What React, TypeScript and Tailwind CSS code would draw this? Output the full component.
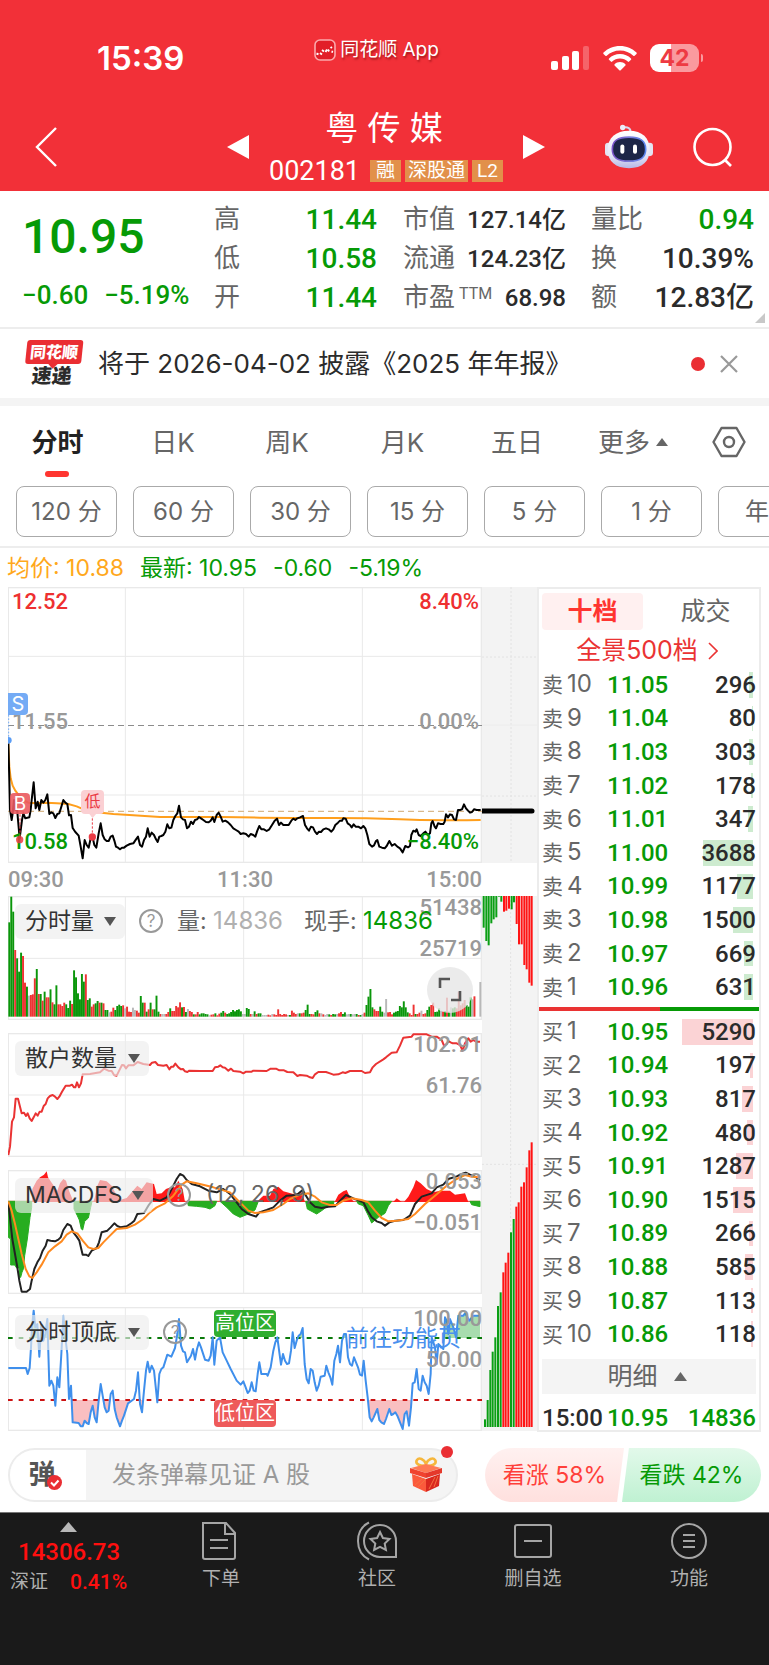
import React from "react";

const UI = "font-['Inter','Noto_Sans_CJK_SC',sans-serif]";
const NUM = "font-['Roboto','Noto_Sans_CJK_SC',sans-serif]";

/* ---------- chart data (three units per pixel) ---------- */

const PRICE =
  "25,490 28,600 30,690 35,720 38,700 42,660 46,690 50,670 54,720 59,775 66,720 70,700 76,715 88,712 92,690 95,660 101,607 107,685 113,665 118,690 124,660 130,668 136,660 142,643 148,702 154,697 160,700 166,714 172,702 178,700 184,680 190,660 196,668 202,672 207,706 213,705 218,744 226,756 236,767 242,800 248,835 254,780 260,795 266,803 272,775 277,768 283,795 289,803 296,760 302,730 308,765 314,778 320,783 326,783 332,770 338,767 344,785 348,800 354,803 360,808 366,803 372,803 380,797 390,792 400,790 408,778 414,770 420,795 426,800 432,780 438,770 443,745 449,770 455,758 462,765 468,778 473,786 478,770 484,768 490,765 496,755 502,733 508,745 514,743 520,720 526,708 532,700 537,677 543,712 549,718 555,720 561,745 567,740 573,725 579,732 585,720 591,718 597,711 603,715 610,720 618,726 626,727 632,722 638,712 643,726 650,705 656,698 662,710 668,725 676,722 684,727 692,735 700,745 708,750 716,755 722,762 730,760 738,762 746,770 752,762 760,765 766,770 772,752 778,738 784,748 792,748 800,753 808,748 816,735 824,722 831,716 837,735 843,728 850,735 858,735 866,735 874,722 880,716 886,720 892,715 900,712 909,708 915,735 921,745 927,752 933,740 939,742 945,755 951,762 957,755 963,756 970,748 978,745 986,748 994,755 1000,748 1006,735 1014,728 1020,722 1026,722 1030,715 1037,716 1043,730 1050,735 1055,742 1061,733 1067,740 1075,740 1083,745 1090,738 1096,745 1102,765 1108,792 1116,800 1122,796 1128,783 1132,780 1138,800 1146,803 1154,805 1160,798 1168,783 1176,797 1184,792 1192,800 1200,805 1208,817 1216,798 1224,802 1230,798 1234,765 1240,752 1246,755 1250,748 1256,765 1262,768 1270,760 1276,755 1284,765 1290,760 1294,730 1298,723 1304,740 1308,745 1314,730 1322,732 1330,732 1334,725 1338,703 1344,712 1350,703 1356,705 1362,718 1368,720 1374,690 1380,690 1386,688 1392,673 1398,685 1404,692 1410,698 1416,696 1422,688 1430,690 1442,690";

const AVERAGE =
  "25,490 28,560 32,595 38,617 46,632 56,645 70,660 85,668 110,670 140,668 170,670 205,672 230,679 255,690 290,697 340,702 400,706 480,711 560,711 660,711 780,713 880,714 1000,714 1100,715 1200,718 1260,720 1340,721 1400,721 1442,720";

const VOLUME =
  "g283 g360 g315 r200 g175 g135 g192 r182 r102 g90 x63 r65 r67 r115 g143 r68 g68 r48 g75 r58 r58 g82 r43 g37 g94 r37 r37 r32 r42 g37 g26 g48 r38 g139 g118 g70 g52 g128 g105 r127 g50 g55 r30 r37 g40 g47 r42 g42 r40 g20 g20 x13 r15 r27 g20 g32 g36 g32 r34 x25 r30 r15 r14 x27 x20 r18 r12 g62 g42 r42 g15 r22 g42 r22 g22 g63 g15 r8 x8 x8 r8 r14 g25 r17 r17 r32 r28 r43 g28 r29 g14 x23 r17 r14 g7 r7 r14 g7 g10 g10 g8 g7 x4 r6 r7 g10 r4 r9 g12 g17 r12 g8 g10 g14 g20 g16 g20 g22 g16 x8 x8 g26 g23 r8 x8 g16 r8 g10 g10 x5 x5 x5 r6 r4 x8 r7 r5 r22 r8 r5 r8 r7 x5 g5 r18 r12 r8 x10 g10 r10 r12 g20 g36 g8 r8 r7 g14 g19 r10 x10 r7 x5 x8 g7 r5 g8 g7 x8 r10 r14 g8 g13 x7 x8 g8 x7 x8 g8 r5 g5 x8 r12 g35 g60 g83 g28 r22 r17 r17 g30 g15 x12 x53 r13 r14 r7 g12 g15 g17 g32 g28 g46 g28 g13 r10 r5 r36 g8 r8 r12 x18 r8 r10 g20 g30 r35 r42 g14 g15 g25 x18 r16 g17 r57 g15 x28 g25 g28 r25 r75 r34 r40 r50 g35 g30 g58 x52 r61 x0 x0 x104".split(" ");

const CROWD =
  "25,825 30,800 36,725 42,712 47,656 54,656 60,680 65,700 72,698 78,708 83,700 89,715 95,723 101,712 107,700 113,707 119,695 125,695 131,678 137,672 143,655 150,648 158,645 165,650 172,657 178,650 186,635 197,617 210,617 216,614 222,622 226,622 231,607 237,622 243,610 248,583 270,582 300,577 312,566 325,572 335,573 342,585 350,587 356,575 366,555 372,556 378,565 385,556 400,556 413,546 430,552 450,555 456,548 466,546 474,555 490,557 500,555 508,568 514,560 520,560 526,551 535,562 543,568 549,567 555,574 562,576 568,572 600,573 638,573 645,562 655,560 661,556 668,562 675,563 685,572 693,566 700,573 720,575 730,580 738,575 755,575 760,572 800,573 812,566 828,566 838,571 852,571 862,576 880,577 892,588 900,585 920,587 930,592 938,594 945,583 955,576 978,576 990,580 1000,584 1015,583 1028,577 1036,579 1050,573 1085,573 1095,579 1110,577 1118,562 1128,552 1150,538 1158,532 1175,518 1190,517 1200,497 1210,473 1235,470 1240,463 1280,463 1295,470 1310,470 1318,475 1325,480 1332,497 1340,492 1345,483 1352,487 1358,490 1370,490 1380,495 1388,512 1395,490 1405,475 1412,485 1420,480 1428,485 1440,485";

const DIF =
  "25,125 32,190 37,235 45,280 52,320 58,360 65,393 80,393 90,385 95,360 103,325 112,305 120,292 128,270 137,255 142,238 152,240 165,242 175,237 182,230 190,208 202,190 212,195 220,215 230,228 238,240 248,282 258,282 265,286 275,270 290,262 297,245 305,215 322,210 332,200 343,188 352,196 362,200 380,197 395,187 403,180 412,160 432,157 445,135 460,115 480,120 500,110 510,95 520,75 530,55 540,40 550,45 560,58 575,70 600,77 625,90 650,95 670,85 690,100 710,125 725,145 745,160 768,168 778,155 800,148 820,140 840,120 860,105 890,103 908,88 918,105 930,125 945,138 965,142 985,138 1005,137 1020,120 1038,103 1060,113 1090,125 1103,150 1115,170 1130,182 1145,187 1155,195 1168,185 1185,180 1210,178 1230,165 1245,130 1265,108 1295,98 1310,80 1330,72 1345,55 1370,47 1385,40 1397,36 1410,42 1425,48 1440,58";

const DEA =
  "25,122 35,150 45,190 55,235 65,280 77,325 88,347 97,352 110,335 125,312 145,275 165,257 185,242 200,222 215,212 232,218 248,240 265,260 280,265 295,262 310,245 330,225 350,205 380,202 405,192 430,175 450,155 470,140 495,128 520,105 545,72 560,62 590,68 640,80 690,95 720,125 745,150 765,157 790,155 820,148 850,130 870,115 900,102 925,98 945,108 965,125 990,133 1010,133 1030,120 1055,113 1085,118 1105,125 1125,150 1145,172 1165,182 1190,180 1225,175 1245,160 1275,130 1305,105 1340,75 1370,55 1395,43 1415,48 1440,50";

const MACD_DOWN = [
  "25,122 25,230 32,235 32,313 44,313 50,322 58,322 58,350 62,350 66,335 70,325 74,285 82,235 90,170 95,140 95,122",
  "222,122 222,145 232,165 238,178 244,205 248,208 254,182 265,172 272,140 276,122",
  "562,122 565,135 590,137 615,140 630,145 645,135 650,122",
  "660,122 680,140 700,160 720,170 745,160 765,148 775,122",
  "917,122 922,145 950,160 965,150 985,135 1000,132 1002,122",
  "1070,122 1075,130 1090,135 1105,165 1115,187 1135,170 1155,158 1165,135 1175,122",
  "1410,122 1415,132 1440,138 1440,122",
];
const MACD_UP = [
  "97,124 97,85 110,60 120,50 132,42 140,32 144,50 156,68 172,90 180,68 190,55 198,60 207,90 215,110 220,124",
  "280,124 284,112 292,75 300,58 320,62 335,75 345,95 360,118 380,112 395,95 412,75 425,85 440,65 462,70 470,100 485,98 498,85 512,80 525,80 535,60 548,85 555,124",
  "770,124 790,105 810,105 820,85 835,78 850,92 880,100 905,95 915,124",
  "1004,124 1015,102 1030,92 1040,88 1050,110 1062,124",
  "1180,124 1190,113 1205,124",
  "1212,124 1225,108 1240,80 1248,58 1262,68 1280,85 1300,95 1320,90 1350,90 1365,102 1395,98 1405,124",
];

const SWING =
  "25,622 78,622 83,640 89,622 93,560 96,500 101,450 106,500 112,490 118,588 124,490 130,540 136,520 142,475 148,675 154,660 160,675 166,735 172,650 178,680 184,580 190,465 196,530 202,580 207,715 213,675 218,785 236,787 242,797 248,797 254,780 260,787 266,790 272,755 278,735 284,770 290,785 296,720 302,670 308,705 314,740 320,755 326,750 332,700 338,690 344,745 350,770 360,797 366,780 372,765 384,728 402,715 408,690 414,635 420,730 426,755 432,690 438,630 443,603 449,635 455,615 462,630 472,725 478,640 484,625 490,620 502,582 514,588 525,562 532,520 537,475 543,555 549,572 555,575 561,605 567,595 573,585 579,565 585,597 591,565 597,545 603,560 615,597 626,600 632,585 638,530 643,612 650,540 660,530 668,575 680,600 692,625 710,660 722,672 730,662 737,680 743,697 749,690 755,665 761,690 767,692 773,640 778,605 784,640 800,640 803,645 812,620 820,570 826,545 832,530 838,575 843,612 849,580 855,600 861,610 867,608 873,570 878,515 884,562 890,540 896,525 902,520 908,502 914,610 920,655 926,668 932,625 938,630 944,665 950,690 956,675 962,648 974,645 979,615 985,635 991,650 997,672 1003,600 1009,580 1014,555 1020,605 1026,540 1032,520 1038,520 1044,590 1050,610 1056,615 1062,590 1068,605 1074,620 1080,642 1086,645 1091,600 1097,660 1103,710 1109,770 1115,782 1121,770 1132,745 1138,778 1144,785 1152,790 1158,775 1168,745 1174,763 1180,760 1186,755 1192,765 1198,780 1208,805 1214,760 1220,752 1227,795 1233,740 1238,668 1244,665 1250,625 1256,685 1262,690 1268,645 1274,665 1280,675 1286,700 1292,640 1295,530 1305,560 1310,610 1315,550 1330,565 1335,470 1340,480 1345,520 1350,475 1360,500 1368,530 1375,465 1390,465 1395,458 1400,465 1408,480 1420,465 1440,465";

const DEPTH_TOP = "g143 g183 g196 g130 g118 g112 g50 g65 r95 r92 r86 g88 g67 r132 r193 r193 r255 r268 r308 r317".split(" ");
const DEPTH_BOTTOM = "g1618 g1560 g1470 g1415 g1372 g1278 g1237 r1177 r1148 r1118 g1057 g1017 r980 r967 r920 r907 r862 r811 r787".split(" ");

const TONE: Record<string, string> = { g: "#0a960a", r: "#ee3333", x: "#b8b8b8" };

const SELLS: [string, string, number][] = [
  ["10", "11.05", 296], ["9", "11.04", 80], ["8", "11.03", 303], ["7", "11.02", 178], ["6", "11.01", 347],
  ["5", "11.00", 3688], ["4", "10.99", 1177], ["3", "10.98", 1500], ["2", "10.97", 669], ["1", "10.96", 631],
];
const BUYS: [string, string, number][] = [
  ["1", "10.95", 5290], ["2", "10.94", 197], ["3", "10.93", 817], ["4", "10.92", 480], ["5", "10.91", 1287],
  ["6", "10.90", 1515], ["7", "10.89", 266], ["8", "10.88", 585], ["9", "10.87", 113], ["10", "10.86", 118],
];

/* ---------- header ---------- */

function StatusBar() {
  return (
    <div className="grid h-[100px] grid-cols-[1fr_auto_1fr] items-center pt-4 pr-4">
      <span className="pl-[97px] text-[33px] leading-10 font-semibold">15:39</span>
      <div className="flex items-center gap-1 pb-4 text-[19px] leading-6 [text-shadow:1px_2px_2px_rgba(90,0,0,.5)]">
        <svg viewBox="0 0 22 22" className="size-[22px]" fill="none">
          <rect x="1" y="1" width="20" height="20" rx="5" fill="#e21e28" stroke="#fba9ac" strokeWidth="1.6" />
          <path d="M2.500 14.500l2 .8M6 14l2 1.500M8 11l2 1.500M11.500 13l1.500-2.500M14 10.500l1 2M16.500 9l1.500-1M17.500 12.500l1.500.5" stroke="#fff" strokeWidth="1.900" />
        </svg>
        <span>同花顺 App</span>
      </div>
      <div className="flex items-center justify-end gap-[13px] pr-[50px]">
        <svg viewBox="0 0 39 25" className="h-[25px] w-[39px]" fill="#fff">
          <rect x="0" y="15" width="7" height="9" rx="2" />
          <rect x="11" y="10" width="7" height="14" rx="2" />
          <rect x="21" y="5" width="7" height="19" rx="2" />
          <rect x="32" y="0" width="6" height="24" rx="2" opacity=".25" />
        </svg>
        <svg viewBox="0 0 34 25" className="h-[25px] w-[34px]" fill="#fff">
          <path d="M17 0C10.500 0 4.700 2.500.500 6.600c-.4.4-.4.9 0 1.300l1.900 1.900c.4.4.9.4 1.300 0C7.100 6.500 11.800 4.500 17 4.500s9.900 2 13.300 5.300c.4.4.9.4 1.300 0l1.900-1.900c.4-.4.4-.9 0-1.300C29.300 2.500 23.500 0 17 0z" />
          <path d="M17 8c-4.300 0-8.200 1.700-11 4.400-.4.4-.4.9 0 1.300l1.900 1.900c.4.4.9.4 1.300 0 2-1.900 4.800-3.100 7.800-3.100s5.800 1.200 7.800 3.100c.4.4.9.4 1.300 0l1.900-1.900c.4-.4.4-.9 0-1.300C25.200 9.700 21.300 8 17 8z" />
          <path d="M17 16c-2.100 0-4 .8-5.400 2.200-.4.4-.4.9 0 1.300l4.700 4.800c.4.4 1 .4 1.400 0l4.700-4.800c.4-.4.4-.9 0-1.300C21 16.800 19.100 16 17 16z" />
        </svg>
        <div className="flex items-center gap-0.5">
          <div className="h-7 w-[49px] rounded-[9px] bg-linear-to-r from-white from-43% to-[#fa9a9e] to-43% text-center text-[23px] leading-7 font-bold text-[#ee3a43]">
            42
          </div>
          <div className="h-2 w-[2px] rounded-r bg-[#fa9a9e]" />
        </div>
      </div>
    </div>
  );
}

function Robot() {
  return (
    <svg viewBox="0 0 144 134" className="h-[45px] w-12">
      <defs>
        <linearGradient id="shell" x1="0" y1="0" x2="0" y2="1">
          <stop offset="0" stopColor="#ffffff" />
          <stop offset=".65" stopColor="#e6e6f6" />
          <stop offset="1" stopColor="#b6b8e6" />
        </linearGradient>
        <linearGradient id="rim" x1="0" y1="0" x2="1" y2="0">
          <stop offset="0" stopColor="#7a52c8" />
          <stop offset=".5" stopColor="#7a7ad8" />
          <stop offset="1" stopColor="#5a86f0" />
        </linearGradient>
      </defs>
      <path d="M76 24C78 12 68 8 56 10" stroke="#d8d8ee" strokeWidth="6" fill="none" />
      <circle cx="53" cy="10" r="8" fill="#ececf8" />
      <rect x="0" y="56" width="20" height="40" rx="10" fill="#e4e4f2" />
      <rect x="124" y="56" width="20" height="40" rx="10" fill="#e4e4f2" />
      <path d="M72 20c40 0 62 22 62 56 0 36-22 56-62 56S8 112 8 76c0-34 24-56 64-56z" fill="url(#shell)" />
      <path d="M72 39c34 0 50 10 50 36s-16 36-50 36-50-10-50-36 16-36 50-36z" fill="#1c2547" stroke="url(#rim)" strokeWidth="5" />
      <rect x="46" y="61" width="12" height="28" rx="6" fill="#fff" />
      <rect x="84" y="61" width="12" height="28" rx="6" fill="#fff" />
    </svg>
  );
}

function TitleBar() {
  return (
    <div className="grid h-[91px] grid-cols-[1fr_auto_1fr] items-center pt-0.5 pl-[3px]">
      <button aria-label="返回" className="ml-[31px] w-6">
        <svg viewBox="0 0 24 40" className="h-10 w-6" fill="none" stroke="#fff" strokeWidth="2.400">
          <path d="M22 1L3 20l19 19" />
        </svg>
      </button>
      <div className="flex items-center gap-5">
        <button aria-label="上一只">
          <svg viewBox="0 0 22 24" className="h-6 w-[22px]" fill="#fff"><path d="M22 0v24L0 12z" /></svg>
        </button>
        <div className="flex flex-col items-center">
          <h1 className="pr-1 text-[33px] leading-[48px]">粤 传 媒</h1>
          <div className={`flex items-center gap-1 ${NUM} text-[19px] leading-[38px]`}>
            <span className="mr-1.5 text-[27px]">002181</span>
            <span className="bg-[#e2904a] px-1.5 leading-[22px]">融</span>
            <span className="bg-[#e2904a] px-[3px] leading-[22px]">深股通</span>
            <span className="bg-[#e2904a] px-[5px] leading-[22px]">L2</span>
          </div>
        </div>
        <button aria-label="下一只">
          <svg viewBox="0 0 22 24" className="h-6 w-[22px]" fill="#fff"><path d="M0 0v24l22-12z" /></svg>
        </button>
      </div>
      <div className="flex items-center justify-end gap-10 pr-[36px]">
        <button aria-label="智能助手"><Robot /></button>
        <button aria-label="搜索">
          <svg viewBox="0 0 40 40" className="size-10" fill="none" stroke="#fff" strokeWidth="2.600">
            <circle cx="19.500" cy="20" r="18" />
            <path d="M31.500 32.500L38 39" />
          </svg>
        </button>
      </div>
    </div>
  );
}

/* ---------- quote summary ---------- */

function Quote() {
  const label = "text-[26px] text-[#666]";
  return (
    <section className={`relative flex h-[138px] border-b-2 border-[#ededed] pt-[9px] ${NUM} text-[#2b2b2b]`}>
      <div className="flex w-[206px] shrink-0 flex-col pl-[22px] font-medium text-[#069a06]">
        <span className="pt-2 text-[48px] leading-[58px]">10.95</span>
        <span className="flex gap-4 pt-2 text-[26px] leading-[42px]"><span>−0.60</span><span>−5.19%</span></span>
      </div>
      <dl className="grid flex-1 auto-rows-[39px] grid-cols-[30fr_159fr_52fr_136fr_52fr_111fr] items-center pr-[15px] pl-2 text-right font-medium whitespace-nowrap [&_dt]:text-left [&_dt]:font-normal">
        <dt className={label}>高</dt><dd className="pr-[26px] text-[28px] text-[#069a06]">11.44</dd>
        <dt className={label}>市值</dt><dd className="pr-[25px] text-[24px]">127.14亿</dd>
        <dt className={label}>量比</dt><dd className="text-[28px] text-[#069a06]">0.94</dd>
        <dt className={label}>低</dt><dd className="pr-[26px] text-[28px] text-[#069a06]">10.58</dd>
        <dt className={label}>流通</dt><dd className="pr-[25px] text-[24px]">124.23亿</dd>
        <dt className={label}>换</dt><dd className="text-[28px]">10.39%</dd>
        <dt className={label}>开</dt><dd className="pr-[26px] text-[28px] text-[#069a06]">11.44</dd>
        <dt className={`${label} flex w-0`}>市盈<sup className="top-2 pl-1 text-[16px] leading-4">TTM</sup></dt><dd className="pr-[25px] text-[24px]">68.98</dd>
        <dt className={label}>额</dt><dd className="text-[28px]">12.83亿</dd>
      </dl>
      <svg viewBox="0 0 10 10" className="absolute right-1 bottom-1 size-2.5" fill="#c8c8c8"><path d="M10 0v10H0z" /></svg>
    </section>
  );
}

function News() {
  return (
    <section className="flex h-[77px] items-center border-b-8 border-[#f4f4f4] pr-[31px] pl-[25px] text-[26px] text-[#2b2b2b]">
      <div className="flex w-[56px] -skew-x-6 flex-col items-center font-black">
        <span className="relative z-10 w-full rounded-[3px] bg-[#ea2e33] text-center text-[16px] leading-6 text-white after:absolute after:-bottom-[3px] after:left-6 after:size-2 after:rotate-45 after:bg-[#ea2e33]">同花顺</span>
        <span className="text-[20px] leading-6">速递</span>
      </div>
      <a href="#report" className="ml-[17px] flex-1 whitespace-nowrap">将于 2026-04-02 披露《2025 年年报》</a>
      <span className="mr-[15px] size-3.5 rounded-full bg-[#ea2e33]" />
      <button aria-label="关闭">
        <svg viewBox="0 0 18 18" className="size-[18px]" stroke="#999" strokeWidth="2.200"><path d="M1 1l16 16M17 1L1 17" /></svg>
      </button>
    </section>
  );
}

/* ---------- period controls ---------- */

function Periods() {
  return (
    <nav className="border-b-2 border-[#ededed] pb-[9px] text-[#666]">
      <div className="flex h-[80px] items-center pb-2 text-[26px]">
        <button className="relative w-[115px] font-bold text-[#222] after:absolute after:-bottom-[15px] after:left-[45px] after:h-1.5 after:w-6 after:rounded-full after:bg-[#ff3530]">分时</button>
        <button className="w-[116px]">日K</button>
        <button className="w-[112px]">周K</button>
        <button className="w-[119px]">月K</button>
        <button className="w-[110px]">五日</button>
        <button className="flex flex-1 items-center justify-center gap-1.5 pr-[18px]">
          更多
          <svg viewBox="0 0 12 8" className="h-2 w-3" fill="#666"><path d="M6 0l6 8H0z" /></svg>
        </button>
        <button aria-label="设置" className="mr-[23px]">
          <svg viewBox="0 0 34 32" className="h-8 w-[34px]" fill="none" stroke="#666" strokeWidth="2.400" strokeLinejoin="round">
            <path d="M9.500 2h15L32.500 16l-8 14h-15L1.500 16z" />
            <circle cx="17" cy="16" r="5" />
          </svg>
        </button>
      </div>
      <div className="flex gap-4 overflow-hidden pl-4 text-[24px] leading-[49px]">
        {["120 分", "60 分", "30 分", "15 分", "5 分", "1 分", "年 K"].map((p) => (
          <button key={p} className="w-[101px] shrink-0 rounded-lg border border-[#aaa]">{p}</button>
        ))}
      </div>
    </nav>
  );
}

/* ---------- charts ---------- */

function Grid({ y, h, rows }: { y: number; h: number; rows: number[] }) {
  return (
    <g stroke="#e9e9e9" strokeWidth="4" fill="none">
      <rect x="25" y={y + 2} width="1419" height={h - 4} />
      {[376, 731, 1087].map((x) => <path key={x} d={`M${x} ${y}v${h}`} strokeWidth="3" />)}
      {rows.map((r) => <path key={r} d={`M24 ${r}h1422`} strokeWidth="3" />)}
    </g>
  );
}

const AXIS = `absolute ${NUM} text-[22px] leading-6 font-medium`;

function PriceChart() {
  return (
    <div className="relative h-[276px]">
      <svg viewBox="24 21 1422 828" preserveAspectRatio="none" className="size-full" fill="none">
        <Grid y={21} h={828} rows={[229, 645]} />
        <path d="M24 436.500h1422" stroke="#8c8c8c" strokeWidth="3.500" strokeDasharray="18 12" />
        <path d="M24 694h1422" stroke="#d9b98c" strokeWidth="3.500" strokeDasharray="18 12" />
        <polyline points={AVERAGE} stroke="#ff9f1c" strokeWidth="6" />
        <polyline points={PRICE} stroke="#000" strokeWidth="6" strokeLinejoin="round" />
        <path d="M26 405v75" stroke="#74abf5" strokeWidth="3" strokeDasharray="5 5" />
        <circle cx="25" cy="481" r="10" fill="#5b9df5" />
      </svg>
      <span className={`${AXIS} top-[3px] left-1 text-[#ee3030]`}>12.52</span>
      <span className={`${AXIS} top-[3px] right-[3px] text-[#ee3030]`}>8.40%</span>
      <span className={`${AXIS} top-[123px] left-1 text-[#999]`}>11.55</span>
      <span className={`${AXIS} top-[123px] right-[3px] text-[#999]`}>0.00%</span>
      <span className={`${AXIS} top-[243px] left-1 text-[#069a06]`}>10.58</span>
      <span className={`${AXIS} top-[243px] right-[3px] text-[#069a06]`}>−8.40%</span>
      <svg viewBox="24 21 1422 828" preserveAspectRatio="none" className="absolute inset-0 size-full" fill="#ea3a44">
        <path d="M60 703v70M277 703v60" stroke="#ea3a44" strokeWidth="3" strokeDasharray="7 5" />
        <circle cx="59" cy="779" r="11" opacity=".85" />
        <circle cx="277" cy="771" r="11" />
        <path d="M266 700h24l-12 14z" fill="#fbd0d3" />
      </svg>
      <span className="absolute top-[106px] left-0 h-[22px] w-5 rounded-r-sm bg-[#74abf5] text-center text-[20px] leading-[22px] text-white">S</span>
      <span className="absolute top-[206px] left-0.5 h-[21px] w-5 rounded-sm bg-[#ea5a5f]/90 text-center text-[19px] leading-[21px] text-white">B</span>
      <span className="absolute top-[203px] left-[73px] h-6 w-[23px] rounded-sm bg-[#fbd0d3] text-center text-[16px] leading-[23px] text-[#ea3a44]">低</span>
    </div>
  );
}

function Indicator({ name, width }: { name: string; width: string }) {
  return (
    <div className={`absolute top-2 left-[7px] h-[35px] ${width}`}>
      <select aria-label="指标" defaultValue={name} className="size-full appearance-none rounded-md bg-[#ececec]/65 pl-2.5 text-[23px] text-[#333]">
        <option>{name}</option>
      </select>
      <svg viewBox="0 0 12 9" className="pointer-events-none absolute top-[13px] right-[9px] h-[9px] w-3" fill="#555"><path d="M0 0h12L6 9z" /></svg>
    </div>
  );
}

function Help({ place }: { place: string }) {
  return (
    <button aria-label="指标说明" className={`absolute top-[13px] size-6 rounded-full border-2 border-[#999] text-[17px] leading-5 text-[#999] ${place}`}>?</button>
  );
}

function VolumeChart() {
  return (
    <div className="relative h-[124px]">
      <svg viewBox="24 48 1422 372" preserveAspectRatio="none" className="size-full">
        <Grid y={48} h={372} rows={[235]} />
        {VOLUME.map((v, i) => {
          const h = Number(v.slice(1));
          return <rect key={i} x={25 + (i * 1419) / VOLUME.length} y={410 - h} width="5.800" height={h} fill={TONE[v[0]]} />;
        })}
      </svg>
      <span className={`${AXIS} top-0 right-0 text-[#999]`}>51438</span>
      <span className={`${AXIS} top-[41px] right-0 text-[#999]`}>25719</span>
      <Indicator name="分时量" width="w-[110px]" />
      <Help place="left-[131px]" />
      <div className="absolute top-[11px] left-[169px] flex text-[23px] leading-7 whitespace-pre text-[#666]">
        <span>量: </span><span className="text-[24px] text-[#b0b0b0]">14836</span>
        <span className="pl-[21px]">现手: </span><span className="text-[24px] text-[#069a06]">14836</span>
      </div>
      <button aria-label="全屏" className="absolute top-[71px] right-[9px] size-[46px] rounded-full bg-[#e6e6e6]/80">
        <svg viewBox="0 0 46 46" className="size-full" fill="none" stroke="#555" strokeWidth="2.600">
          <path d="M13 21v-9h10M24 33h9v-9" />
        </svg>
      </button>
    </div>
  );
}

function CrowdChart() {
  return (
    <div className="relative h-[124px]">
      <svg viewBox="24 459 1422 372" preserveAspectRatio="none" className="size-full">
        <Grid y={459} h={372} rows={[645]} />
        <polyline points={CROWD} fill="none" stroke="#ea3333" strokeWidth="6" strokeLinejoin="round" />
      </svg>
      <span className={`${AXIS} top-0 right-0 text-[#999]`}>102.91</span>
      <span className={`${AXIS} top-[41px] right-0 text-[#999]`}>61.76</span>
      <Indicator name="散户数量" width="w-[134px]" />
    </div>
  );
}

function MacdChart() {
  return (
    <div className="relative h-[124px]">
      <svg viewBox="24 28 1422 372" preserveAspectRatio="none" className="size-full">
        <Grid y={28} h={372} rows={[214]} />
        <path d="M24 122h1416" stroke="#ea3333" strokeWidth="3" />
        {MACD_DOWN.map((p) => <polygon key={p} points={p} fill="#27ad20" stroke="#27ad20" strokeWidth="3" />)}
        {MACD_UP.map((p) => <polygon key={p} points={p} fill="#ff1a1a" />)}
        <polyline points={DIF} fill="none" stroke="#222" strokeWidth="6" strokeLinejoin="round" />
        <polyline points={DEA} fill="none" stroke="#ff8a1f" strokeWidth="6" strokeLinejoin="round" />
      </svg>
      <span className={`${AXIS} top-0 right-0 text-[#999]`}>0.053</span>
      <span className={`${AXIS} top-[41px] right-0 text-[#999]`}>−0.051</span>
      <Indicator name="MACDFS" width="w-[138px]" />
      <Help place="left-[159px]" />
      <span className="absolute top-[10px] left-[198px] text-[23px] leading-7 text-[#666]">(12, 26, 9)</span>
    </div>
  );
}

function SwingChart() {
  return (
    <div className="relative h-[124px]">
      <svg viewBox="24 439 1422 372" preserveAspectRatio="none" className="size-full" fill="none">
        <clipPath id="high"><rect x="24" y="439" width="1422" height="93" /></clipPath>
        <clipPath id="low"><rect x="24" y="718" width="1422" height="93" /></clipPath>
        <Grid y={439} h={372} rows={[625]} />
        <polygon points={`25,532 ${SWING} 1440,532`} fill="#a8dcae" clipPath="url(#high)" />
        <polygon points={`25,718 ${SWING} 1440,718`} fill="#f9bfc1" clipPath="url(#low)" />
        <path d="M24 532h1422" stroke="#0a7a0a" strokeWidth="6" strokeDasharray="14 18" />
        <path d="M24 718h1422" stroke="#cc1414" strokeWidth="6" strokeDasharray="14 18" />
        <polyline points={SWING} stroke="#3f8fec" strokeWidth="6" strokeLinejoin="round" />
      </svg>
      <span className={`${AXIS} top-0 right-0 text-[#999]`}>100.00</span>
      <span className={`${AXIS} top-[41px] right-0 text-[#999]`}>50.00</span>
      <Indicator name="分时顶底" width="w-[134px]" />
      <Help place="left-[155px]" />
      <span className="absolute top-[3px] left-[206px] h-[27px] w-[62px] rounded bg-[#2fae2f] text-center text-[20px] leading-[26px] text-white">高位区</span>
      <span className="absolute top-[93px] left-[206px] h-[27px] w-[62px] rounded bg-[#ee5a5a] text-center text-[20px] leading-[26px] text-white">低位区</span>
      <a href="#feature" className="absolute top-[15px] left-[338px] text-[23px] leading-8 text-[#4a90ee]">前往功能页</a>
    </div>
  );
}

function Depth() {
  const tone = (c: string) => (c === "g" ? "#0a9f14" : "#ff1414");
  return (
    <div className="w-[55px] shrink-0">
      <svg viewBox="0 0 55 276" className="mb-[33px] block h-[276px] w-[55px] bg-[#f3f3f3]">
        <path d="M29 0v276M0 70h55M0 209h55" stroke="#e2e2e2" strokeDasharray="2 2" />
        <path d="M0 138h55" stroke="#ececec" />
        <path d="M0 224h50" stroke="#000" strokeWidth="5" strokeLinecap="round" />
      </svg>
      <svg viewBox="636 48 165 1605" className="block h-[535px] w-[55px] bg-[#f3f3f3]">
        <path d="M722 48v1605M636 853h165" stroke="#e2e2e2" strokeWidth="3" strokeDasharray="6 6" />
        {DEPTH_TOP.map((v, i) => (
          <rect key={i} x={638 + Math.round(i * 7.6)} y="48" width="6" height={Number(v.slice(1)) - 48} fill={tone(v[0])} />
        ))}
        {DEPTH_BOTTOM.map((v, i) => (
          <rect key={i} x={642 + Math.round(i * 7.8)} y={Number(v.slice(1))} width="6" height={1641 - Number(v.slice(1))} fill={tone(v[0])} />
        ))}
      </svg>
    </div>
  );
}

/* ---------- order book ---------- */

function Side({ word, rows, bar }: { word: string; rows: [string, string, number][]; bar: string }) {
  return (
    <table className="h-[336px] w-full table-fixed border-collapse text-[24px] leading-6">
      <tbody>
        {rows.map(([n, price, qty]) => (
          <tr key={n}>
            <th scope="row" className="w-[65px] p-0 text-left font-normal whitespace-nowrap text-[#666]">
              <span className="mr-1 text-[21px]">{word}</span>{n}
            </th>
            <td className={`w-[66px] p-0 ${NUM} font-medium text-[#069a06]`}>{price}</td>
            <td className={`relative p-0 text-right ${NUM} font-medium text-[#2b2b2b]`}>
              <span className={`absolute inset-y-1 right-[3px] ${bar}`} style={{ width: Math.max(1, Math.round(qty / 74)) }} />
              <span className="relative">{qty}</span>
            </td>
          </tr>
        ))}
      </tbody>
    </table>
  );
}

function OrderBook() {
  return (
    <section className="w-[224px] shrink-0 border-2 border-[#ececec] px-[3px]">
      <div className="flex pt-1 text-[25px] leading-[37px] text-[#666]">
        <button className="h-[37px] w-[101px] rounded bg-[#fff0f0] font-bold text-[#ff3530]">十档</button>
        <button className="flex-1 pl-3">成交</button>
      </div>
      <a href="#depth" className="flex h-[38px] items-center justify-center gap-2.5 pt-1 pr-1 text-[25px] text-[#ea3333]">
        全景500档
        <svg viewBox="0 0 10 18" className="h-[18px] w-2.5" fill="none" stroke="#ea3333" strokeWidth="1.600"><path d="M1 1l8 8-8 8" /></svg>
      </a>
      <Side word="卖" rows={SELLS} bar="bg-[#cdebcf]" />
      <div className="-mx-[3px] mt-[3px] mb-1 flex h-1">
        <span className="w-[55%] bg-[#ea3333]" /><span className="flex-1 bg-[#069a06]" />
      </div>
      <Side word="买" rows={BUYS} bar="bg-[#fbd3d5]" />
      <button className="mt-2 flex h-[35px] w-full items-center justify-center gap-4 bg-[#f4f4f4] pr-1 text-[25px] text-[#666]">
        明细
        <svg viewBox="0 0 13 9" className="h-[9px] w-[13px]" fill="#666"><path d="M6.500 0L13 9H0z" /></svg>
      </button>
      <div className={`grid grid-cols-[65px_66px_1fr] pt-3 ${NUM} text-[24px] leading-6 font-medium text-[#069a06]`}>
        <span className="text-[#2b2b2b]">15:00</span><span>10.95</span><span className="text-right">14836</span>
      </div>
    </section>
  );
}

/* ---------- footer ---------- */

function Danmu() {
  return (
    <div className="flex items-center gap-[27px] px-2 pt-4 pb-2.5">
      <div className="relative flex h-[54px] w-[450px] items-center rounded-full border-2 border-[#ececec] bg-[#f4f4f4]">
        <button aria-label="弹幕开关" className="relative h-full w-[76px] rounded-l-full bg-white pr-3 text-[27px] leading-[44px] font-bold text-[#555]">
          弹
          <svg viewBox="0 0 15 15" className="absolute top-[25px] left-[37px] size-[15px]">
            <circle cx="7.500" cy="7.500" r="7.500" fill="#ea2e33" />
            <path d="M4 7.500l3 3 4.500-5" fill="none" stroke="#fff" strokeWidth="2" />
          </svg>
        </button>
        <input aria-label="发弹幕" placeholder="发条弹幕见证 A 股" className="min-w-0 flex-1 bg-transparent pl-[26px] text-[24px] placeholder:text-[#999]" />
        <svg viewBox="0 0 34 36" className="mr-[13px] h-9 w-[34px]">
          <path d="M17 9C9 9 6 6 8 3s7-1 9 4c2-5 7-7 9-4s-1 6-9 6z" fill="none" stroke="#f6b73c" strokeWidth="2.600" />
          <path d="M2 11l15-4 15 4-15 5z" fill="#ff7a55" />
          <path d="M1 11l16 5v5L1 16z" fill="#f0432f" />
          <path d="M33 11l-16 5v5l16-5z" fill="#e5392b" />
          <path d="M3 17l14 5v13L4 29z" fill="#fb5a3c" />
          <path d="M31 17l-14 5v13l13-6z" fill="#d9281f" />
          <path d="M6 28l8-7M9 30l8-8M25 30l4-11M20 32l6-12" stroke="#f5713f" strokeWidth="1" />
        </svg>
        <span className="absolute -top-1 right-[3px] size-3 rounded-full bg-[#ea2e33]" />
      </div>
      <div className="flex flex-1 text-[23px] leading-[54px]">
        <button className="flex-1 rounded-l-full bg-linear-to-b from-[#fff1f0] to-[#ffe0de] text-[#ff3f3a] [clip-path:polygon(0_0,100%_0,95%_100%,0_100%)]">看涨 58%</button>
        <button className="-ml-0.5 flex-1 rounded-r-full bg-linear-to-b from-[#e2f9ea] to-[#bff1d2] text-[#069a06] [clip-path:polygon(5%_0,100%_0,100%_100%,0_100%)]">看跌 42%</button>
      </div>
    </div>
  );
}

function TabBar() {
  const item = "flex flex-1 flex-col items-center pt-2 text-[19px] leading-7 text-[#b0b0b0]";
  const icon = "mb-1 size-10 fill-none stroke-[#a5a5a5] stroke-2";
  return (
    <nav className="flex h-[154px] border-t border-[#777] bg-[#1a1a1a] pr-0.5">
      <button className={`flex w-[143px] flex-col items-start pt-[9px] pl-2.5 ${NUM} font-medium text-[#ff0f0f]`}>
        <svg viewBox="0 0 17 10" className="ml-[50px] h-2.5 w-[17px]" fill="#b8b8b8"><path d="M8.500 0L17 10H0z" /></svg>
        <span className="ml-2 pt-1 text-[24px] leading-8">14306.73</span>
        <span className="flex items-center gap-[22px] text-[21px] leading-7"><span className="text-[19px] font-normal text-[#b0b0b0]">深证</span>0.41%</span>
      </button>
      <a href="#trade" className={item}>
        <svg viewBox="0 0 40 40" className={icon}><path d="M2 2h23l9 10v24a2 2 0 0 1-2 2H4a2 2 0 0 1-2-2zM24 2v11h10M9 19h18M9 27h18" /></svg>
        下单
      </a>
      <a href="#community" className={item}>
        <svg viewBox="0 0 40 40" className={icon}>
          <path d="M23 4a16 16 0 0 1 16 16v16H23a16 16 0 0 1 0-32z" />
          <path d="M12 1.500C5 5 1 12 1 20s4 15 11 18.500" />
          <path d="M23 11l2.900 6 6.600.9-4.800 4.600 1.200 6.500-5.900-3.100-5.900 3.100 1.200-6.500-4.800-4.600 6.600-.9z" />
        </svg>
        社区
      </a>
      <a href="#remove" className={item}>
        <svg viewBox="0 0 40 40" className={icon}><rect x="2" y="4" width="36" height="32" rx="2" /><path d="M11 20h18" /></svg>
        删自选
      </a>
      <a href="#more" className={item}>
        <svg viewBox="0 0 40 40" className={icon}><circle cx="20" cy="20" r="17" /><path d="M14 14h12M14 20h12M14 26h12" /></svg>
        功能
      </a>
    </nav>
  );
}

export default function App() {
  return (
    <div className={`w-full overflow-hidden bg-white ${UI}`}>
      <header className="bg-[#f23038] text-white">
        <StatusBar />
        <TitleBar />
      </header>
      <main>
        <Quote />
        <News />
        <Periods />
        <div className="flex gap-4 pt-[5px] pb-1 pl-[7px] text-[23px] leading-[30px] text-[#069a06]">
          <span className="text-[#ffa81c]">均价: 10.88</span>
          <span>最新: 10.95</span>
          <span>-0.60</span>
          <span>-5.19%</span>
        </div>
        <div className="flex px-2">
          <div className="min-w-0 flex-1">
            <PriceChart />
            <div className={`flex h-[33px] items-center justify-between ${NUM} text-[22px] font-medium text-[#999]`}>
              <span>09:30</span><span>11:30</span><span>15:00</span>
            </div>
            <div className="flex flex-col gap-[13px]">
              <VolumeChart />
              <CrowdChart />
              <MacdChart />
              <SwingChart />
            </div>
          </div>
          <Depth />
          <OrderBook />
        </div>
      </main>
      <footer>
        <Danmu />
        <TabBar />
      </footer>
    </div>
  );
}
